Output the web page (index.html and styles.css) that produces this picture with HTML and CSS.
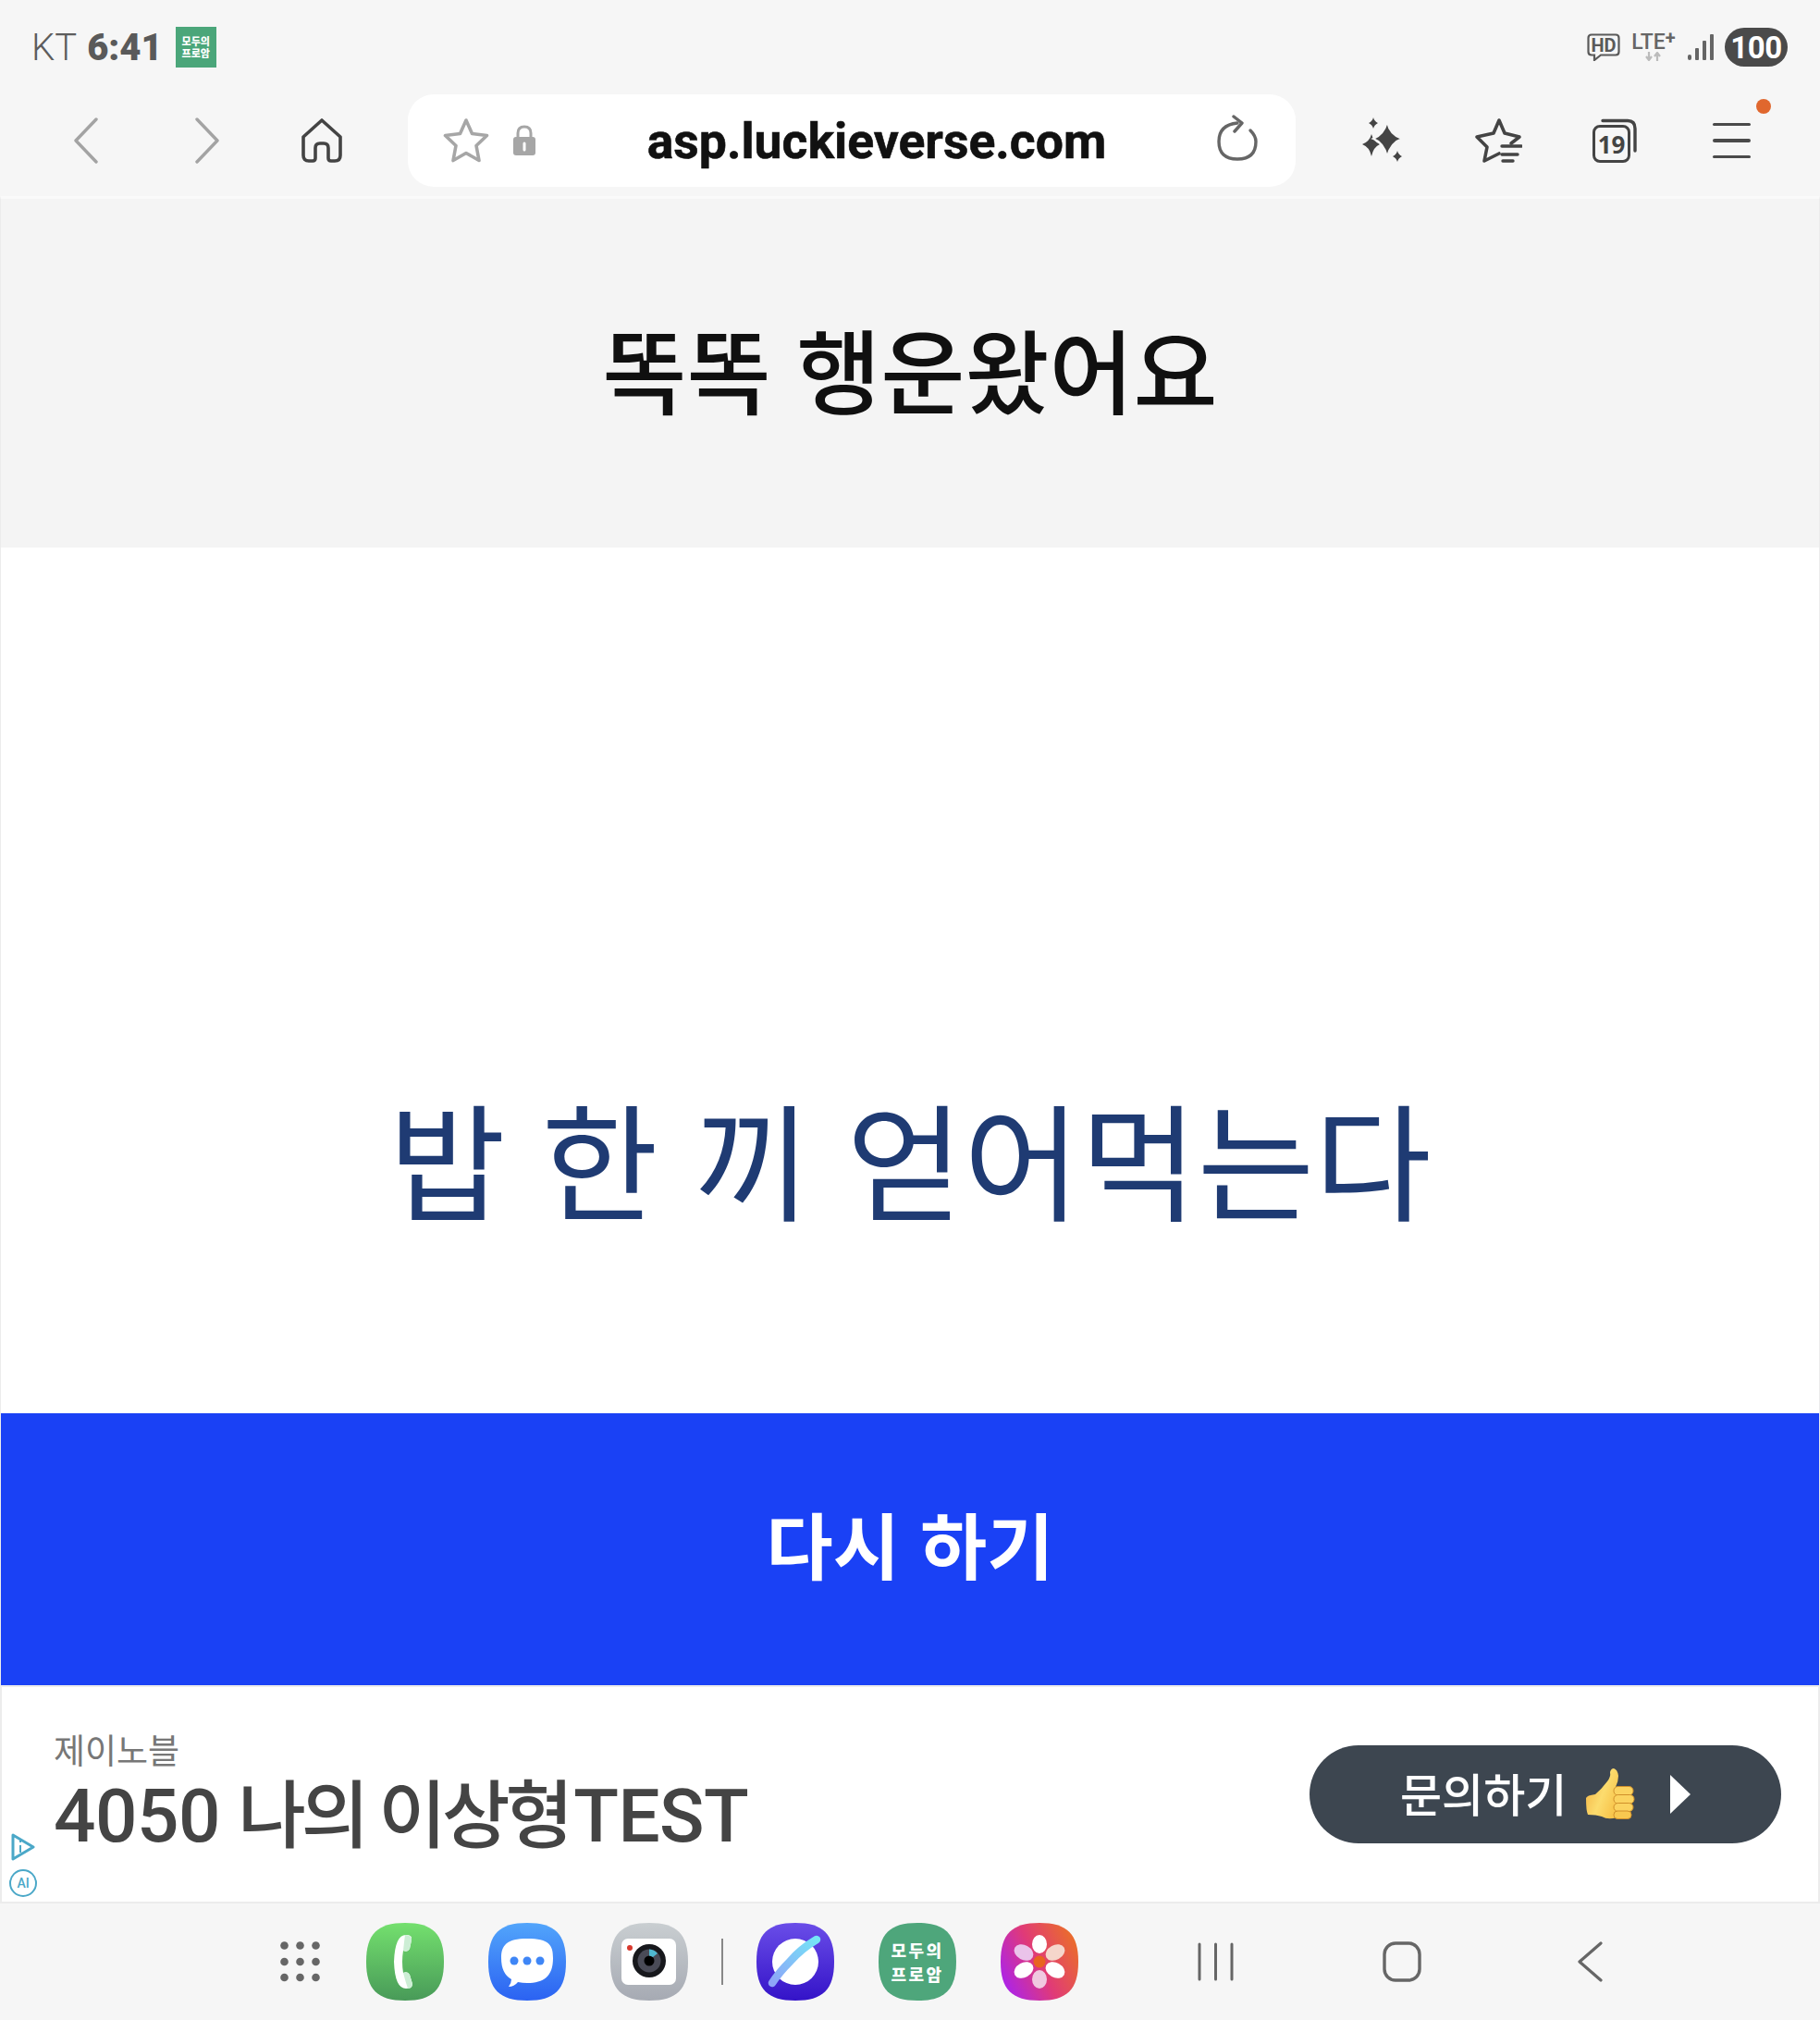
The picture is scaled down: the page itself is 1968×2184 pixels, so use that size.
FILE: index.html
```html
<!DOCTYPE html>
<html lang="ko">

<head>
    <meta charset="utf-8">
    <title>똑똑 행운왔어요</title>
    <link rel="stylesheet" href="styles.css">
</head>

<body>
    <div class="screen">

        <!-- STATUS BAR -->
        <div class="status">
            <div class="status-left">
                <span class="carrier">KT</span>
                <span class="clock">6:41</span>
                <div class="noti-app"><span>모두의</span><span>프로암</span></div>
            </div>
            <div class="status-right">
                <svg class="st-hd" width="36" height="30" viewBox="0 0 36 30">
                    <path d="M5 1.500H31Q34.500 1.500 34.500 5V20Q34.500 23.500 31 23.500H15L8 29V23.500H5Q1.500 23.500 1.500 20V5Q1.500 1.500 5 1.500Z" fill="none" stroke="#5a5a5a" stroke-width="2.200"/>
                    <text x="18" y="19.500" text-anchor="middle" class="st-hd-text">HD</text>
                </svg>
                <div class="st-lte">
                    <span class="st-lte-text">LTE<span class="st-lte-plus">+</span></span>
                    <svg width="20" height="10" viewBox="0 0 20 10">
                        <path d="M5 0V8M2 5L5 9L8 5" fill="none" stroke="#bbb" stroke-width="2.200"/>
                        <path d="M14 10V2M11 5L14 1L17 5" fill="none" stroke="#bbb" stroke-width="2.200"/>
                    </svg>
                </div>
                <svg class="st-signal" width="28" height="28" viewBox="0 0 28 28">
                    <rect x="0" y="22" width="4" height="6" rx="2" fill="#666"/>
                    <rect x="8" y="15" width="4" height="13" rx="1" fill="#666"/>
                    <rect x="16" y="7" width="4" height="21" rx="1" fill="#666"/>
                    <rect x="24" y="0" width="4" height="28" rx="1" fill="#666"/>
                </svg>
                <div class="battery">100</div>
            </div>
        </div>

        <!-- BROWSER TOOLBAR -->
        <div class="toolbar">
            <div class="tool tool-back">
                <svg width="28" height="50" viewBox="0 0 28 50"><path d="M25 2L3 25L25 48" fill="none" stroke="#a3a3a3" stroke-width="3.4" stroke-linecap="round" stroke-linejoin="round"/></svg>
            </div>
            <div class="tool tool-fwd">
                <svg width="28" height="50" viewBox="0 0 28 50"><path d="M3 2L25 25L3 48" fill="none" stroke="#a3a3a3" stroke-width="3.4" stroke-linecap="round" stroke-linejoin="round"/></svg>
            </div>
            <div class="tool tool-home">
                <svg width="46" height="48" viewBox="0 0 46 48"><path d="M23 2L43 20V40Q43 46 37 46H33Q30 46 30 43V32Q30 27 25 27H21Q16 27 16 32V43Q16 46 13 46H9Q3 46 3 40V20Z" fill="none" stroke="#444" stroke-width="3.6" stroke-linejoin="round"/></svg>
            </div>

            <div class="urlbox">
                <svg class="url-star" width="52" height="50" viewBox="0 0 52 50"><path d="M26 3L32.5 17.5L48.500 19.500L37 30.500L40 46.500L26 38.500L12 46.500L15 30.500L3.500 19.500L19.500 17.500Z" fill="none" stroke="#a6a6a6" stroke-width="3.6" stroke-linejoin="round"/></svg>
                <svg class="url-lock" width="26" height="34" viewBox="0 0 26 34">
                    <path d="M6 16V9Q6 2 13 2Q20 2 20 9V16" fill="none" stroke="#a6a6a6" stroke-width="3"/>
                    <rect x="1" y="13" width="24" height="20" rx="3" fill="#a6a6a6"/>
                    <path d="M13 20V27" stroke="#fff" stroke-width="3" stroke-linecap="round"/>
                </svg>
                <div class="url-text">asp.luckieverse.com</div>
                <svg class="url-reload" width="44" height="50" viewBox="0 0 44 50">
                    <path d="M36 17Q42 23 42 29Q42 48 22 48Q2 48 2 29Q2 11 22 9" fill="none" stroke="#666" stroke-width="3.4" stroke-linecap="round"/>
                    <path d="M18 2L27 9L19 18" fill="none" stroke="#666" stroke-width="3.4" stroke-linecap="round" stroke-linejoin="round"/>
                </svg>
            </div>

            <div class="tool-right">
                <div class="tool">
                    <svg width="46" height="50" viewBox="0 0 46 50" fill="#444">
                        <path d="M12 18Q14 26 21 29Q14 32 12 42Q10 32 2 29Q10 26 12 18Z"/>
                        <path d="M29 5Q32 19 45 23Q33 27 29 42Q25 27 14 23Q25 19 29 5Z" stroke="#f6f6f6" stroke-width="2"/>
                        <path d="M14 0Q15 4 19 6Q15 8 14 12Q13 8 9 6Q13 4 14 0Z"/>
                        <path d="M40 36Q41 40 45 42Q41 44 40 48Q39 44 35 42Q39 40 40 36Z"/>
                    </svg>
                </div>
                <div class="tool">
                    <svg width="52" height="50" viewBox="0 0 52 50">
                        <path d="M30 31H51M30 40H47M31 47H42" fill="none" stroke="#444" stroke-width="3.400" stroke-linecap="round"/>
                        <path d="M40 28L49 21L33 17L27 3L21 17L3 21L14 32L11 47L27 39" fill="none" stroke="#444" stroke-width="3.600" stroke-linejoin="round" stroke-linecap="round"/>
                    </svg>
                </div>
                <div class="tool">
                    <div class="tabs">
                        <svg class="tabs-back" width="50" height="50" viewBox="0 0 50 50"><path d="M12 3.500H39Q47 3.500 47 12V36" fill="none" stroke="#444" stroke-width="3.400" stroke-linecap="round"/></svg>
                        <div class="tabs-front">19</div>
                    </div>
                </div>
                <div class="tool tool-menu">
                    <div class="menu-lines">
                        <div class="menu-line"></div>
                        <div class="menu-line"></div>
                        <div class="menu-line"></div>
                    </div>
                    <div class="menu-dot"></div>
                </div>
            </div>
        </div>

        <!-- PAGE -->
        <div class="page">
            <div class="page-head">똑똑 행운왔어요</div>
            <div class="page-body">밥 한 끼 얻어먹는다</div>
            <div class="retry">다시 하기</div>

            <div class="ad">
                <div class="ad-marks">
                    <svg width="28" height="30" viewBox="0 0 28 30">
                        <path d="M3 2L25 15L3 28Z" fill="none" stroke="#4ba8c8" stroke-width="3" stroke-linejoin="round"/>
                        <path d="M11 13V21M11 8V10" stroke="#4ba8c8" stroke-width="2"/>
                    </svg>
                    <div class="ad-ai">AI</div>
                </div>
                <div class="ad-copy">
                    <div class="ad-brand">제이노블</div>
                    <div class="ad-title">4050 <span class="ad-title-ko">나의 이상형</span>TEST</div>
                </div>
                <div class="ad-btn">
                    <span class="ad-btn-text">문의하기</span>
                    <svg class="ad-thumb" width="54" height="56" viewBox="0 0 54 56">
                        <defs>
                            <linearGradient id="g-thumb" x1="0" y1="0" x2="1" y2="0.600"><stop offset="0" stop-color="#f3ad3c"/><stop offset="0.600" stop-color="#fcdc6e"/><stop offset="1" stop-color="#f8c54c"/></linearGradient>
                        </defs>
                        <path d="M1 32Q2 29 11 28Q18 22 24 14Q28 9 27 4Q28 0 31 0Q35 1 36 8Q36 14 33 20H34V53Q25 56 18 52Q12 50 3 50Q1 46 1 32Z" fill="url(#g-thumb)"/>
                        <rect x="31" y="19.500" width="21" height="9.500" rx="4.500" fill="#fbd360" stroke="#d08f2a"/>
                        <rect x="31" y="28.500" width="22" height="9.500" rx="4.500" fill="#fbd360" stroke="#d08f2a"/>
                        <rect x="31" y="37.500" width="21" height="9" rx="4.500" fill="#fbd360" stroke="#d08f2a"/>
                        <rect x="31" y="46" width="19" height="8.500" rx="4" fill="#f8c850" stroke="#d08f2a"/>
                    </svg>
                    <svg class="ad-arrow" width="22" height="42" viewBox="0 0 22 42"><path d="M0 0L22 21L0 42Z" fill="#fff"/></svg>
                </div>
            </div>
        </div>

        <!-- BOTTOM DOCK -->
        <div class="dock">
            <svg class="dock-grid" width="43" height="44" viewBox="0 0 43 44" fill="#666">
                <circle cx="4.500" cy="4.500" r="4.300"/><circle cx="21.500" cy="4.500" r="4.300"/><circle cx="38.500" cy="4.500" r="4.300"/>
                <circle cx="4.500" cy="22" r="4.300"/><circle cx="21.500" cy="22" r="4.300"/><circle cx="38.500" cy="22" r="4.300"/>
                <circle cx="4.500" cy="39" r="4.300"/><circle cx="21.500" cy="39" r="4.300"/><circle cx="38.500" cy="39" r="4.300"/>
            </svg>

            <div class="apps">
                <svg class="app" width="84" height="84" viewBox="0 0 84 84">
                    <defs>
                        <linearGradient id="g-phone" x1="0" y1="0" x2="0" y2="1"><stop offset="0" stop-color="#74e06e"/><stop offset="1" stop-color="#489a58"/></linearGradient>
                        <linearGradient id="g-msg" x1="0" y1="0" x2="0" y2="1"><stop offset="0" stop-color="#52a5fb"/><stop offset="1" stop-color="#2b62f2"/></linearGradient>
                        <linearGradient id="g-cam" x1="0" y1="0" x2="0" y2="1"><stop offset="0" stop-color="#c9ced1"/><stop offset="1" stop-color="#a6aab3"/></linearGradient>
                        <linearGradient id="g-web" x1="0" y1="0" x2="0" y2="1"><stop offset="0" stop-color="#6a4de8"/><stop offset="1" stop-color="#3413c8"/></linearGradient>
                        <linearGradient id="g-ring" x1="0" y1="1" x2="1" y2="0"><stop offset="0" stop-color="#8ea4f8"/><stop offset="1" stop-color="#74e4f6"/></linearGradient>
                        <linearGradient id="g-gal" x1="0" y1="0.800" x2="1" y2="0.300"><stop offset="0" stop-color="#a922f0"/><stop offset="0.500" stop-color="#e03a78"/><stop offset="1" stop-color="#ea6c2c"/></linearGradient>
                        <path id="squircle" d="M42 0C72 0 84 12 84 42C84 72 72 84 42 84C12 84 0 72 0 42C0 12 12 0 42 0Z"/>
                    </defs>
                    <use href="#squircle" fill="url(#g-phone)"/>
                    <path d="M43 13Q31 13 30 42Q31 71 43 71Q50 71 50 66L47 56Q45 52 40 54Q38 42 40 30Q45 32 47 28L49 18Q50 13 43 13Z" fill="#fff"/>
                    <path d="M42 13Q50 13 49 19L47 28Q45 32 40 30Q41 20 42 13ZM40 54Q45 52 47 56L50 66Q50 71 45 71Q42 62 40 54Z" fill="#cdeed5"/>
                </svg>
                <svg class="app" width="84" height="84" viewBox="0 0 84 84">
                    <use href="#squircle" fill="url(#g-msg)"/>
                    <path d="M42 17C66 17 70 24 70 38C70 58 60 65 42 65Q37 65 32 64Q28 69 22 69Q25 65 25 61Q14 55 14 38C14 24 20 17 42 17Z" fill="#fff"/>
                    <circle cx="28" cy="41" r="4.500" fill="#3f86f6"/><circle cx="42" cy="41" r="4.500" fill="#3f86f6"/><circle cx="56" cy="41" r="4.500" fill="#3f86f6"/>
                </svg>
                <svg class="app" width="84" height="84" viewBox="0 0 84 84">
                    <use href="#squircle" fill="url(#g-cam)"/>
                    <rect x="12" y="17" width="59" height="50" rx="7" fill="#fff"/>
                    <circle cx="21" cy="27" r="3" fill="#d8392e"/>
                    <circle cx="42" cy="41" r="18" fill="#17181c"/>
                    <circle cx="42" cy="41" r="12.500" fill="#4a4b57"/>
                    <circle cx="42" cy="41" r="5.500" fill="#000"/>
                    <path d="M42 28.500A12.500 12.500 0 0 1 51 33L46 37Q44 35.500 42 35.500Z" fill="#4fb8d0"/>
                </svg>
                <div class="dock-sep"></div>
                <svg class="app" width="84" height="84" viewBox="0 0 84 84">
                    <use href="#squircle" fill="url(#g-web)"/>
                    <circle cx="42" cy="42" r="25" fill="#fff"/>
                    <path d="M65 18Q48 28 36 42Q24 54 17 65" fill="none" stroke="url(#g-ring)" stroke-width="8.500" stroke-linecap="round"/>
                </svg>
                <div class="app app-modu"><span>모두의</span><span>프로암</span></div>
                <svg class="app" width="84" height="84" viewBox="0 0 84 84">
                    <use href="#squircle" fill="url(#g-gal)"/>
                    <ellipse cx="42" cy="23" rx="8" ry="10" fill="#fff"/>
                    <ellipse cx="42" cy="61" rx="8" ry="10" fill="#f0c9e0"/>
                    <ellipse cx="59" cy="32" rx="11" ry="8" fill="#f5d6cb" transform="rotate(-28 59 32)"/>
                    <ellipse cx="25" cy="32" rx="11" ry="8" fill="#eac3ea" transform="rotate(28 25 32)"/>
                    <ellipse cx="59" cy="51" rx="11" ry="8" fill="#fff" transform="rotate(28 59 51)"/>
                    <ellipse cx="25" cy="51" rx="11" ry="8" fill="#fff" transform="rotate(-28 25 51)"/>
                    <circle cx="42" cy="42" r="6.500" fill="#e8641f"/>
                </svg>
            </div>

            <div class="nav">
                <svg width="40" height="42" viewBox="0 0 40 42" stroke="#666" stroke-width="3" stroke-linecap="round">
                    <path d="M2 2V40M19.500 2V40M37 2V40" fill="none"/>
                </svg>
                <svg class="nav-home" width="42" height="44" viewBox="0 0 42 44"><rect x="2" y="2" width="38" height="40" rx="12" fill="none" stroke="#666" stroke-width="3.400"/></svg>
                <svg class="nav-back" width="28" height="44" viewBox="0 0 28 44"><path d="M26 2L3 22L26 42" fill="none" stroke="#666" stroke-width="3.200" stroke-linecap="round" stroke-linejoin="round"/></svg>
            </div>
        </div>

    </div>
</body>

</html>
```

FILE: styles.css
```css
* {
    box-sizing: border-box;
}

html, body {
    margin: 0;
    padding: 0;
}

.screen {
    width: 1968px;
    height: 2184px;
    display: flex;
    flex-direction: column;
    background-color: #f6f6f6;
    font-family: Roboto, "Noto Sans CJK KR", sans-serif;
    overflow: hidden;
}

/* STATUS BAR */
.status {
    height: 100px;
    flex: none;
    display: flex;
    justify-content: space-between;
    align-items: flex-start;
    padding: 29px 35px 0 34px;
}

.status-left {
    display: flex;
    align-items: center;
    height: 44px;
}

.carrier {
    font-size: 40px;
    font-weight: 300;
    color: #5d5d5d;
    margin-right: 11px;
}

.clock {
    font-size: 40px;
    font-weight: 900;
    color: #5a5a5a;
    margin-right: 14px;
}

.noti-app {
    width: 44px;
    height: 44px;
    background-color: #4ba67a;
    color: #fff;
    font-family: "Noto Sans CJK KR", sans-serif;
    font-size: 11px;
    font-weight: 900;
    line-height: 13px;
    display: flex;
    flex-direction: column;
    align-items: center;
    justify-content: center;
}

.status-right {
    display: flex;
    align-items: center;
    height: 44px;
}

.st-hd-text {
    font-family: Roboto, sans-serif;
    font-size: 20px;
    font-weight: 700;
    fill: #5a5a5a;
}

.st-lte {
    margin-left: 11px;
    width: 50px;
    display: flex;
    flex-direction: column;
    align-items: center;
}

.st-lte-text {
    font-size: 23px;
    line-height: 20px;
    color: #666;
    font-weight: 500;
    height: 20px;
    white-space: nowrap;
}

.st-lte-plus {
    font-size: 20px;
    font-weight: 700;
    position: relative;
    top: -5px;
}

.st-signal {
    margin-left: 12px;
}

.battery {
    margin-left: 12px;
    width: 68px;
    height: 42px;
    border-radius: 21px;
    background-color: #4a4a4a;
    color: #fff;
    font-size: 33px;
    font-weight: 700;
    letter-spacing: -0.5px;
    display: flex;
    align-items: center;
    justify-content: center;
}

/* BROWSER TOOLBAR */
.toolbar {
    height: 112px;
    flex: none;
    display: flex;
    align-items: flex-start;
    padding: 2px 0 0 29px;
}

.tool {
    width: 128px;
    height: 100px;
    flex: none;
    display: flex;
    align-items: center;
    justify-content: center;
    position: relative;
}

.tool-fwd {
    width: 134px;
}

.tool-home {
    width: 114px;
}

.urlbox {
    width: 960px;
    height: 100px;
    flex: none;
    margin-left: 36px;
    background-color: #fff;
    border-radius: 28px;
    display: flex;
    align-items: center;
    padding-left: 37px;
}

.url-lock {
    margin-left: 24px;
}

.url-text {
    width: 736px;
    text-align: center;
    font-size: 53.5px;
    font-weight: 700;
    color: #111;
    -webkit-text-stroke: 0.6px #111;
}

.url-reload {
    margin-top: -6px;
}

.tool-right {
    display: flex;
    margin-left: 30px;
}

.tool-right .tool {
    width: 126px;
}

.tabs {
    width: 50px;
    height: 50px;
    position: relative;
}

.tabs-back {
    position: absolute;
    left: 0;
    top: 0;
}

.tabs-front {
    position: absolute;
    left: 1px;
    bottom: 1px;
    width: 41px;
    height: 41px;
    border: 3.5px solid #444;
    border-radius: 8px;
    font-family: "Open Sans", sans-serif;
    font-size: 26px;
    font-weight: 700;
    color: #444;
    display: flex;
    align-items: center;
    justify-content: center;
}

.menu-lines {
    width: 41px;
    display: flex;
    flex-direction: column;
    gap: 14px;
}

.menu-line {
    height: 3.5px;
    background-color: #4a4a4a;
    border-radius: 2px;
}

.menu-dot {
    position: absolute;
    left: 90px;
    top: 5px;
    width: 16px;
    height: 16px;
    border-radius: 50%;
    background-color: #e0672e;
}

/* PAGE */
.page {
    flex: 1;
    display: flex;
    flex-direction: column;
    background-color: #fff;
    border-top: 3px solid #fafafa;
    border-left: 1px solid #ececec;
    border-right: 1px solid #ececec;
}

.page-head {
    height: 377px;
    flex: none;
    background-color: #f4f4f4;
    color: #101010;
    font-family: "Noto Sans CJK KR", sans-serif;
    font-size: 99px;
    font-weight: 500;
    display: flex;
    align-items: center;
    justify-content: center;
    padding-bottom: 14px;
}

.page-body {
    height: 936px;
    flex: none;
    background-color: #fff;
    color: #1f3b73;
    font-family: "Noto Sans CJK KR", sans-serif;
    font-size: 137.5px;
    font-weight: 400;
    line-height: 200px;
    text-align: center;
    padding-top: 558px;
}

.retry {
    height: 294px;
    flex: none;
    background-color: #1a41f5;
    color: #fff;
    font-family: "Noto Sans CJK KR", sans-serif;
    font-size: 78.5px;
    font-weight: 700;
    display: flex;
    align-items: center;
    justify-content: center;
    padding-bottom: 14px;
}

.ad {
    height: 236px;
    flex: none;
    position: relative;
    display: flex;
    align-items: flex-start;
    justify-content: space-between;
    background-color: #fff;
    border-top: 2px solid #ececec;
    border-bottom: 2px solid #ececec;
    border-left: 1px solid #ececec;
    border-right: 1px solid #ececec;
    padding: 48px 40px 0 56px;
}

.ad-marks {
    position: absolute;
    left: 8px;
    bottom: 5px;
    display: flex;
    flex-direction: column;
    align-items: center;
    gap: 9px;
}

.ad-ai {
    width: 30px;
    height: 30px;
    border: 2.5px solid #4ba8c8;
    border-radius: 50%;
    color: #4ba8c8;
    font-size: 14px;
    font-weight: 500;
    display: flex;
    align-items: center;
    justify-content: center;
}

.ad-brand {
    font-size: 37px;
    line-height: 46px;
    color: #777;
    font-weight: 400;
}

.ad-title {
    font-size: 80px;
    line-height: 96px;
    font-weight: 500;
    letter-spacing: -0.5px;
    color: #444;
    margin-top: -2px;
}

.ad-title-ko {
    letter-spacing: -5px;
    margin-right: 5px;
}

.ad-btn {
    width: 510px;
    height: 106px;
    margin-top: 15px;
    border-radius: 53px;
    background-color: #3d4650;
    color: #fff;
    font-size: 49px;
    font-weight: 500;
    display: flex;
    align-items: center;
    padding-left: 98px;
}

.ad-btn-text {
    margin-top: -5px;
}

.ad-thumb {
    margin-left: 20px;
}

.ad-arrow {
    margin-left: 38px;
}

/* BOTTOM DOCK */
.dock {
    height: 126px;
    flex: none;
    display: flex;
    align-items: center;
    padding-left: 303px;
}

.dock-grid {
    flex: none;
}

.apps {
    display: flex;
    align-items: center;
    gap: 48px;
    margin-left: 50px;
}

.app {
    width: 84px;
    height: 84px;
    flex: none;
}

.dock-sep {
    width: 2px;
    height: 50px;
    margin: 0 -12px;
    background-color: #888;
}

.app-modu {
    background-color: #4ea67b;
    clip-path: path("M42 0C72 0 84 12 84 42C84 72 72 84 42 84C12 84 0 72 0 42C0 12 12 0 42 0Z");
    color: #fff;
    font-family: "Noto Sans CJK KR", sans-serif;
    font-size: 18px;
    font-weight: 900;
    letter-spacing: 2.5px;
    line-height: 26px;
    display: flex;
    flex-direction: column;
    align-items: center;
    justify-content: center;
}

.nav {
    display: flex;
    align-items: center;
    margin-left: 129px;
}

.nav-home {
    margin-left: 160px;
}

.nav-back {
    margin-left: 168px;
}
```
